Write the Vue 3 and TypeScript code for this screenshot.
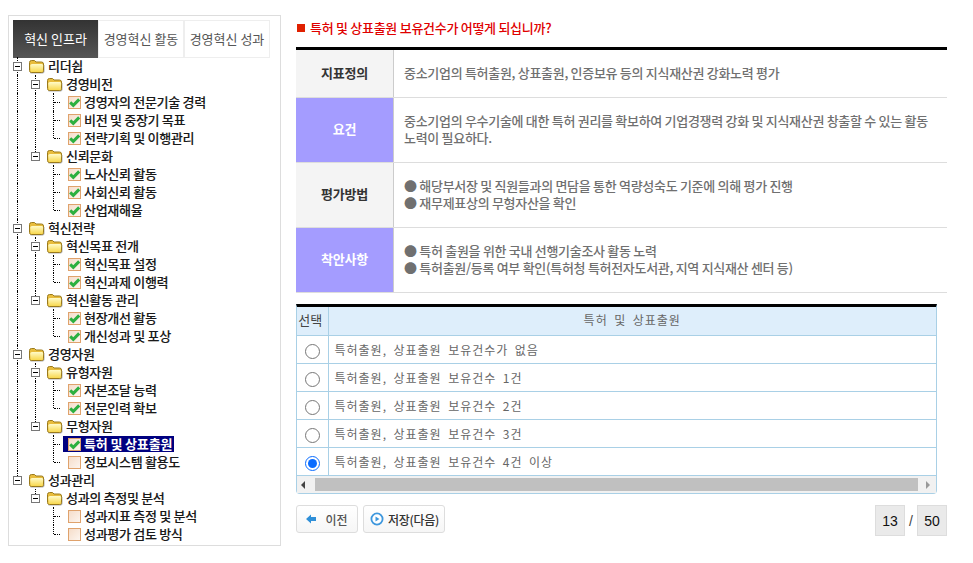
<script setup lang="ts">
import { computed } from 'vue'

type Node = { t: string; l: number; s?: 'on' | 'off'; cur?: boolean }
const nodes: Node[] = [
  { t: '리더쉽', l: 0 },
  { t: '경영비전', l: 1 },
  { t: '경영자의 전문기술 경력', l: 2, s: 'on' },
  { t: '비전 및 중장기 목표', l: 2, s: 'on' },
  { t: '전략기획 및 이행관리', l: 2, s: 'on' },
  { t: '신뢰문화', l: 1 },
  { t: '노사신뢰 활동', l: 2, s: 'on' },
  { t: '사회신뢰 활동', l: 2, s: 'on' },
  { t: '산업재해율', l: 2, s: 'on' },
  { t: '혁신전략', l: 0 },
  { t: '혁신목표 전개', l: 1 },
  { t: '혁신목표 설정', l: 2, s: 'on' },
  { t: '혁신과제 이행력', l: 2, s: 'on' },
  { t: '혁신활동 관리', l: 1 },
  { t: '현장개선 활동', l: 2, s: 'on' },
  { t: '개신성과 및 포상', l: 2, s: 'on' },
  { t: '경영자원', l: 0 },
  { t: '유형자원', l: 1 },
  { t: '자본조달 능력', l: 2, s: 'on' },
  { t: '전문인력 확보', l: 2, s: 'on' },
  { t: '무형자원', l: 1 },
  { t: '특허 및 상표출원', l: 2, s: 'on', cur: true },
  { t: '정보시스템 활용도', l: 2, s: 'off' },
  { t: '성과관리', l: 0 },
  { t: '성과의 측정및 분석', l: 1 },
  { t: '성과지표 측정 및 분석', l: 2, s: 'off' },
  { t: '성과평가 검토 방식', l: 2, s: 'off' },
]

// For a given row and ancestor level: does another sibling follow further down?
function hasNext(i: number, level: number): boolean {
  for (let j = i + 1; j < nodes.length; j++) {
    if (nodes[j].l < level) return false
    if (nodes[j].l === level) return true
  }
  return false
}

const rows = computed(() =>
  nodes.map((n, i) => {
    const guides: string[] = []
    for (let lv = 0; lv < n.l; lv++) guides.push(hasNext(i, lv) ? 'pass' : 'none')
    const last = hasNext(i, n.l)
    return { ...n, guides, lineClass: last ? 'through' : 'end' }
  }),
)

const info = [
  { h: '지표정의', lines: ['중소기업의 특허출원, 상표출원, 인증보유 등의 지식재산권 강화노력 평가'], tall: false, accent: false },
  { h: '요건', lines: ['중소기업의 우수기술에 대한 특허 권리를 확보하여 기업경쟁력 강화 및 지식재산권 창출할 수 있는 활동', '노력이 필요하다.'], tall: true, accent: true },
  { h: '평가방법', lines: ['● 해당부서장 및 직원들과의 면담을 통한 역량성숙도 기준에 의해 평가 진행', '● 재무제표상의 무형자산을 확인'], tall: true, accent: false },
  { h: '착안사항', lines: ['● 특허 출원을 위한 국내 선행기술조사 활동 노력', '● 특허출원/등록 여부 확인(특허청 특허전자도서관, 지역 지식재산 센터 등)'], tall: true, accent: true },
]

const options = [
  '특허출원, 상표출원 보유건수가 없음',
  '특허출원, 상표출원 보유건수 1건',
  '특허출원, 상표출원 보유건수 2건',
  '특허출원, 상표출원 보유건수 3건',
  '특허출원, 상표출원 보유건수 4건 이상',
]
</script>

<template>
  <div class="page">
    <svg class="defs" width="0" height="0" aria-hidden="true">
      <defs>
        <linearGradient id="boxfill" x1="0" y1="0" x2="1" y2="1">
          <stop offset="0" stop-color="#f5dcc8" />
          <stop offset="1" stop-color="#fdf6f0" />
        </linearGradient>
        <linearGradient id="folderfill" x1="0" y1="0" x2="0" y2="1">
          <stop offset="0" stop-color="#fffbc8" />
          <stop offset="1" stop-color="#f8d850" />
        </linearGradient>
      </defs>
    </svg>
    <aside class="side">
      <div class="tabs">
        <div class="tab active">혁신 인프라</div>
        <div class="tab">경영혁신 활동</div>
        <div class="tab">경영혁신 성과</div>
      </div>
      <div class="tree">
        <div v-for="(r, i) in rows" :key="i" class="row">
          <span v-for="(g, k) in r.guides" :key="k" class="cell" :class="g"></span>
          <span v-if="r.l < 2" class="cell" :class="r.lineClass">
            <svg class="minus" width="9" height="9" viewBox="0 0 9 9">
              <rect x=".5" y=".5" width="8" height="8" fill="#fff" stroke="#777" />
              <path d="M2 4.500h5" stroke="#000" />
            </svg>
          </span>
          <span v-else class="cell elbow" :class="r.lineClass"></span>
          <svg v-if="r.l < 2" class="folder" width="16" height="15" viewBox="0 0 16 15">
            <path d="M1.500 14.500H13.500Q15.500 14.500 15.500 12.500V6H13V12H1.500Z" fill="#b0b0b0" />
            <path d="M.5 11.500V3.500Q.5 1.500 2.500 1.500H5.500L7 3H12.500Q14.500 3 14.500 5V11.500Q14.500 13.500 12.500 13.500H2.500Q.5 13.500 .5 11.500Z" fill="#e8bc3c" stroke="#9a7a1c" />
            <path d="M1.200 6.500Q1.400 5 3 5H12.800Q14.400 5 14.200 6.500L13.700 12.900H1.700Z" fill="url(#folderfill)" />
          </svg>
          <span v-if="r.l === 2" class="leaf" :class="{ cur: r.cur }">
            <svg width="13" height="13" viewBox="0 0 13 13" class="box">
              <rect x=".5" y=".5" width="12" height="12" fill="url(#boxfill)" stroke="#dfa26c" />
              <path v-if="r.s === 'on'" d="M2.200 6.300L5.300 9.300L11.200 3.400" fill="none" stroke="#2cb040" stroke-width="3" />
            </svg>
            <span class="lbl leaf-lbl">{{ r.t }}</span>
          </span>
          <span v-else class="lbl">{{ r.t }}</span>
        </div>
      </div>
    </aside>

    <main class="main">
      <h1 class="title"><span class="sq"></span>특허 및 상표출원 보유건수가 어떻게 되십니까?</h1>
      <section class="info">
        <div v-for="x in info" :key="x.h" class="irow" :class="{ tall: x.tall }">
          <div class="ih" :class="{ accent: x.accent }">{{ x.h }}</div>
          <div class="ib">
            <div v-for="ln in x.lines" :key="ln">{{ ln }}</div>
          </div>
        </div>
      </section>

      <section class="grid">
        <table>
          <thead>
            <tr>
              <th class="pick">선택</th>
              <th class="spaced">특허 및 상표출원</th>
            </tr>
          </thead>
          <tbody>
            <tr v-for="(o, i) in options" :key="o">
              <td class="radio"><input type="radio" name="ans" :checked="i === 4" /></td>
              <td class="opt spaced">{{ o }}</td>
            </tr>
          </tbody>
        </table>
        <div class="scroll">
          <span class="arrow l"></span>
          <span class="thumb"></span>
          <span class="arrow r"></span>
        </div>
      </section>

      <footer class="foot">
        <button class="btn prev" type="button">
          <svg width="12" height="10" viewBox="0 0 12 10"><path d="M0 5L5 0.500V3H10V7H5V9.500Z" fill="#2f8fd8" /></svg>
          <span>이전</span>
        </button>
        <button class="btn save" type="button">
          <svg width="14" height="14" viewBox="0 0 14 14">
            <circle cx="7" cy="7" r="5.600" fill="#fff" stroke="#3d97dd" stroke-width="1.800" />
            <path d="M5.500 4.500L9.500 7L5.500 9.500Z" fill="#3d97dd" />
          </svg>
          <span>저장(다음)</span>
        </button>
        <div class="pager">
          <span class="pg">13</span>
          <span class="slash">/</span>
          <span class="pg">50</span>
        </div>
      </footer>
    </main>
  </div>
</template>

<style scoped>
.page {
  display: flex;
  width: 973px;
  height: 563px;
  padding: 15px 0 0 8px;
  box-sizing: border-box;
  font-family: "Noto Sans CJK KR", "Liberation Sans", sans-serif;
  background: #fff;
  gap: 15px;
}
.defs {
  position: absolute;
}
.side {
  width: 273px;
  height: 531px;
  box-sizing: border-box;
  border: 1px solid #ddd;
  padding: 4px 0 0 4px;
}
.tabs {
  display: flex;
  height: 38px;
  width: 257px;
}
.tab {
  width: 86px;
  box-sizing: border-box;
  border: 1px solid #eee;
  font-size: 13px;
  padding-bottom: 1px;
  color: #555;
  display: flex;
  align-items: center;
  justify-content: center;
  white-space: nowrap;
}
.tab.active {
  width: 85px;
  color: #fff;
  border: 0;
  background: linear-gradient(#333, #555);
}
.tree {
  margin-top: -1px;
}
.row {
  display: flex;
  align-items: center;
  height: 18px;
  white-space: nowrap;
}
.cell {
  position: relative;
  width: 18px;
  height: 18px;
  flex: none;
}
.cell.pass::before,
.cell.through::before,
.cell.end::before {
  content: "";
  position: absolute;
  left: 4px;
  top: 0;
  bottom: 0;
  border-left: 1px dotted #000;
}
.cell.end::before {
  bottom: 9px;
}
.elbow::after {
  content: "";
  position: absolute;
  left: 5px;
  top: 9px;
  width: 6px;
  border-top: 1px dotted #000;
}
.minus {
  position: absolute;
  left: 0;
  top: 5px;
}
.folder {
  flex: none;
  margin: 1px 3px 0 -2px;
}
.lbl {
  font-size: 13px;
  font-weight: 500;
  letter-spacing: -0.3px;
  color: #1a1a1a;
  line-height: 18px;
  text-shadow: 0.3px 0.3px 0 rgba(0, 0, 0, 0.25);
}
.leaf {
  display: inline-flex;
  align-items: center;
  height: 16px;
  margin-left: 1px;
}
.box {
  margin-right: 3px;
  flex: none;
}
.leaf-lbl {
  margin-top: -1px;
}
.leaf.cur {
  background: #000080;
  box-shadow: -5px 0 0 #000080;
  padding-right: 2px;
}
.leaf.cur .lbl {
  color: #fff;
  font-weight: 700;
  letter-spacing: -0.15px;
}
.main {
  width: 651px;
  flex: none;
}
.title {
  margin: 0;
  height: 25px;
  padding-bottom: 7px;
  display: flex;
  align-items: center;
  font-size: 13px;
  letter-spacing: -0.28px;
  font-weight: 500;
  color: #e00000;
  border-bottom: 3px solid #000;
  box-sizing: content-box;
}
.sq {
  width: 8px;
  height: 8px;
  background: #e02000;
  margin: 0 5px 0 1px;
}
.irow {
  display: grid;
  grid-template-columns: 98px 1fr;
  height: 48px;
  box-sizing: border-box;
  border-bottom: 1px solid #ddd;
}
.irow.tall {
  height: 65px;
}
.ih {
  background: #f4f4f4;
  border-right: 1px solid #ccc;
  color: #333;
  font-size: 13px;
  letter-spacing: -0.2px;
  font-weight: 700;
  padding-bottom: 3px;
  display: flex;
  align-items: center;
  justify-content: center;
}
.ih.accent {
  background: #a49cff;
  color: #fff;
}
.ib {
  padding: 0 0 3px 10px;
  display: flex;
  flex-direction: column;
  justify-content: center;
  font-size: 13px;
  letter-spacing: -0.3px;
  font-weight: 500;
  color: #707070;
  line-height: 17px;
}
.grid {
  margin-top: 11px;
  width: 641px;
  border-top: 3px solid #000;
  border-left: 1px solid #a9d0e6;
  border-right: 1px solid #a9d0e6;
  border-bottom: 1px solid #a9d0e6;
  border-radius: 0 0 4px 4px;
  box-sizing: border-box;
}
table {
  width: 100%;
  table-layout: fixed;
  border-collapse: collapse;
}
th {
  height: 24px;
  background: #deeefb;
  font-weight: 400;
  font-size: 12px;
  color: #444;
  border-bottom: 1px solid #a9d0e6;
  padding: 0 0 4px;
}
th.pick {
  width: 31px;
  font-size: 13px;
  padding-right: 4px;
  box-sizing: border-box;
  border-right: 1px solid #a9d0e6;
}
td {
  height: 27px;
  padding: 0;
  border-bottom: 1px solid #a9d0e6;
}
td.radio {
  border-right: 1px solid #a9d0e6;
}
td.radio input {
  display: block;
  width: 15px;
  height: 15px;
  margin: 4px auto 0;
  accent-color: #0a6cff;
}
.spaced {
  font-size: 12px;
  letter-spacing: 1px;
  word-spacing: 2.800px;
  color: #666;
}
td.opt {
  padding-left: 6px;
}
.scroll {
  display: flex;
  align-items: center;
  height: 17px;
  background: #f1f1f1;
}
.arrow {
  width: 0;
  height: 0;
  border-top: 4px solid transparent;
  border-bottom: 4px solid transparent;
  flex: none;
}
.arrow.l {
  border-right: 4px solid #444;
  margin: 0 10px 0 4px;
}
.arrow.r {
  border-left: 4px solid #999;
  margin: 0 6px 0 8px;
}
.thumb {
  flex: 1;
  height: 13px;
  background: #c0c0c0;
}
.foot {
  display: flex;
  align-items: flex-start;
  margin-top: 11px;
  gap: 5px;
}
.btn {
  display: flex;
  align-items: center;
  justify-content: center;
  height: 28px;
  padding: 0;
  border: 1px solid #ddd;
  border-radius: 3px;
  background: linear-gradient(#fff, #f6f6f6);
  font: 500 12px "Noto Sans CJK KR", sans-serif;
  color: #555;
}
.prev {
  width: 62px;
  gap: 7px;
}
.save {
  width: 82px;
  gap: 4px;
  color: #333;
  letter-spacing: -0.3px;
  padding-left: 1px;
}
.pager {
  margin-left: auto;
  display: flex;
  align-items: center;
  font-family: "Liberation Sans", sans-serif;
  font-size: 14px;
  color: #111;
}
.pg {
  width: 30px;
  height: 31px;
  box-sizing: border-box;
  border: 1px solid #ddd;
  background: #eaeaea;
  display: flex;
  align-items: center;
  justify-content: center;
}
.slash {
  width: 12px;
  text-align: center;
  color: #444;
}
</style>
